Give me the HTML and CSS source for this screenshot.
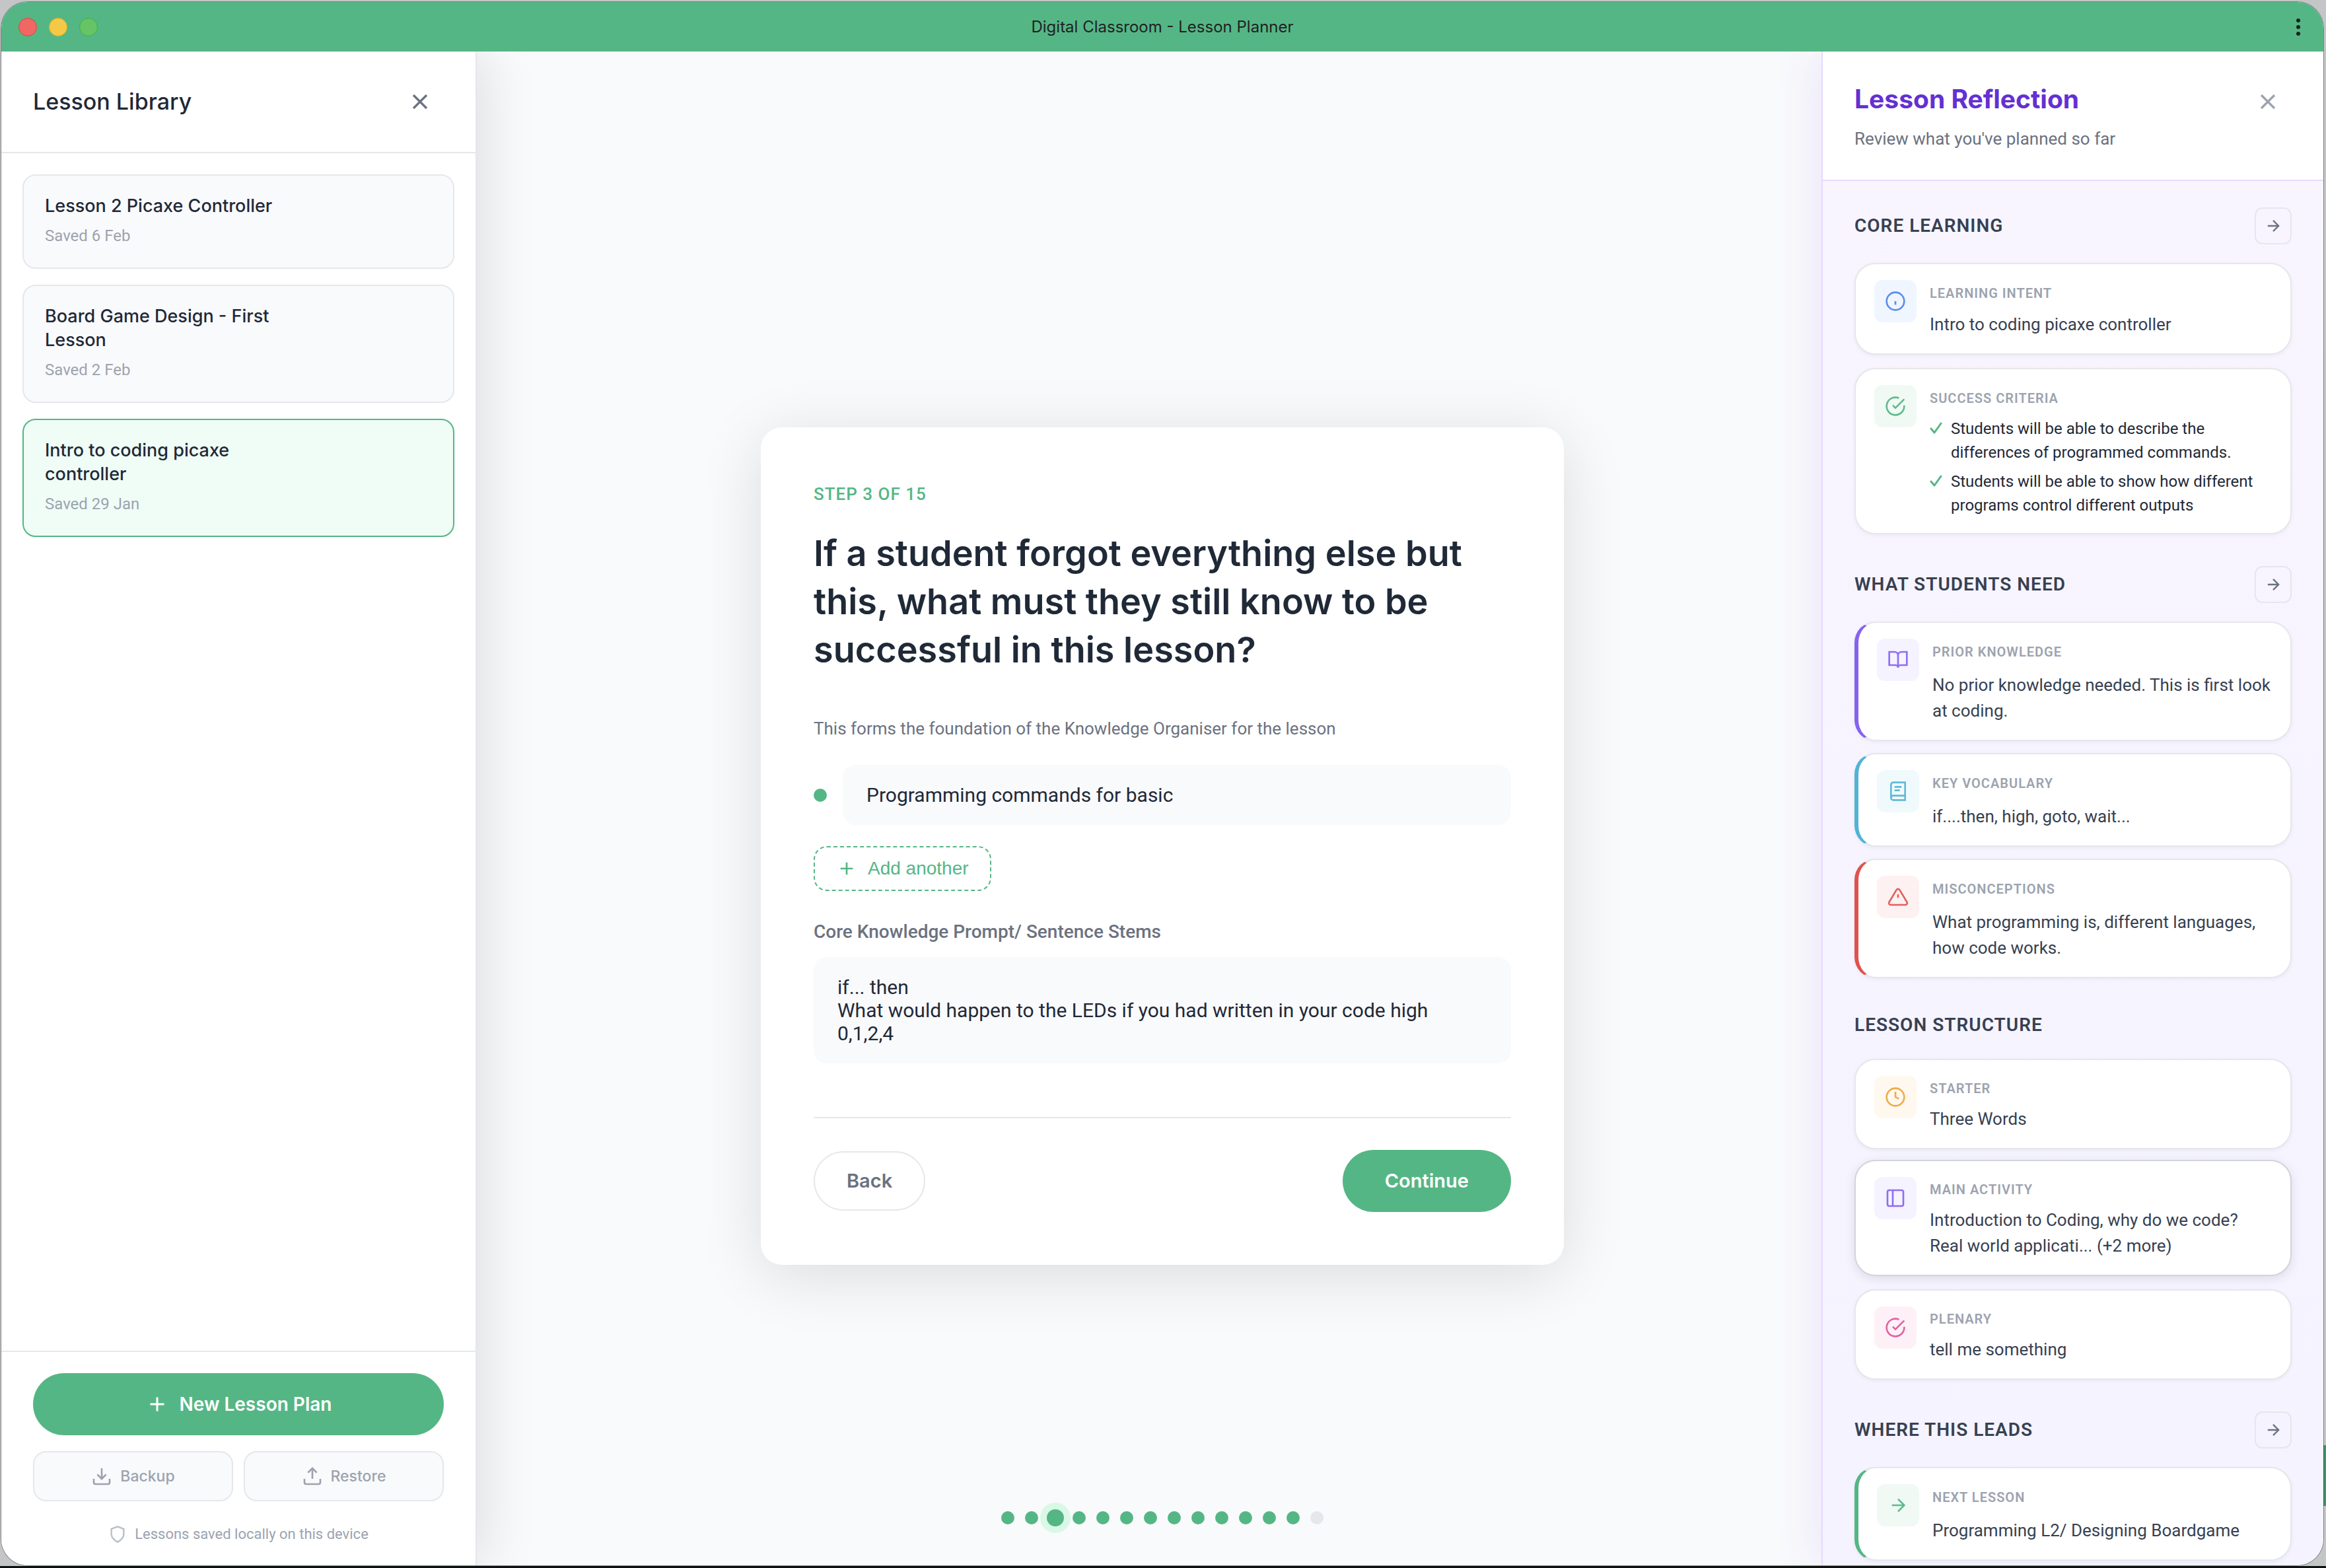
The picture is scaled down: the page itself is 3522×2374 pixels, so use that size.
FILE: index.html
```html
<!DOCTYPE html>
<html lang="en">
<head>
<meta charset="utf-8">
<title>Digital Classroom - Lesson Planner</title>
<link rel="stylesheet" href="styles.css">
</head>
<body>
<div class="window">
  <header class="titlebar">
    <div class="lights"><span class="light red"></span><span class="light amber"></span><span class="light green"></span></div>
    <div class="window-title">Digital Classroom - Lesson Planner</div>
    <button class="menu" aria-label="Menu"><svg width="8" height="28" viewBox="0 0 8 28"><circle cx="4" cy="4" r="3"/><circle cx="4" cy="14" r="3"/><circle cx="4" cy="24" r="3"/></svg></button>
  </header>
  <div class="workspace">
    <aside class="library">
      <div class="library-head">
        <h2>Lesson Library</h2>
        <button class="close" aria-label="Close library"><svg width="40" height="40" viewBox="0 0 24 24"><path d="M18 6 6 18M6 6l12 12"/></svg></button>
      </div>
      <div class="lessons">
        <button class="lesson"><span class="lesson-name">Lesson 2 Picaxe Controller</span><span class="lesson-date">Saved 6 Feb</span></button>
        <button class="lesson"><span class="lesson-name">Board Game Design - First Lesson</span><span class="lesson-date">Saved 2 Feb</span></button>
        <button class="lesson selected"><span class="lesson-name">Intro to coding picaxe controller</span><span class="lesson-date">Saved 29 Jan</span></button>
      </div>
      <div class="library-foot">
        <button class="primary new-plan"><svg width="36" height="36" viewBox="0 0 24 24"><path d="M12 5v14M5 12h14"/></svg>New Lesson Plan</button>
        <div class="file-actions">
          <button class="file-button"><svg width="32" height="32" viewBox="0 0 24 24"><path d="M21 15v4a2 2 0 0 1-2 2H5a2 2 0 0 1-2-2v-4M7 10l5 5 5-5M12 15V3"/></svg>Backup</button>
          <button class="file-button"><svg width="32" height="32" viewBox="0 0 24 24"><path d="M21 15v4a2 2 0 0 1-2 2H5a2 2 0 0 1-2-2v-4M17 8l-5-5-5 5M12 3v12"/></svg>Restore</button>
        </div>
        <p class="local-note"><svg width="28" height="28" viewBox="0 0 24 24"><path d="M12 22s8-4 8-10V5l-8-3-8 3v7c0 6 8 10 8 10z"/></svg>Lessons saved locally on this device</p>
      </div>
    </aside>

    <main class="planner">
      <form class="step-card">
        <p class="step-count">STEP 3 OF 15</p>
        <h1>If a student forgot everything else but this, what must they still know to be successful in this lesson?</h1>
        <label class="hint" for="knowledge">This forms the foundation of the Knowledge Organiser for the lesson</label>
        <div class="entry"><span class="bullet"></span><input class="field" id="knowledge" type="text" value="Programming commands for basic"></div>
        <button type="button" class="add"><svg width="32" height="32" viewBox="0 0 24 24"><path d="M12 5v14M5 12h14"/></svg>Add another</button>
        <label class="stem-label" for="stems">Core Knowledge Prompt/ Sentence Stems</label>
        <textarea class="field stems" id="stems" rows="3">if... then
What would happen to the LEDs if you had written in your code high 0,1,2,4</textarea>
        <div class="step-actions">
          <button type="button" class="back">Back</button>
          <button type="button" class="primary continue">Continue</button>
        </div>
      </form>
      <div class="dots"><i></i><i></i><i class="now"></i><i></i><i></i><i></i><i></i><i></i><i></i><i></i><i></i><i></i><i></i><i class="todo"></i></div>
    </main>

    <aside class="reflection">
      <div class="reflection-head">
        <div><h2>Lesson Reflection</h2><p>Review what you've planned so far</p></div>
        <button class="close pale" aria-label="Close reflection"><svg width="40" height="40" viewBox="0 0 24 24"><path d="M18 6 6 18M6 6l12 12"/></svg></button>
      </div>
      <div class="reflection-body">
        <section>
          <div class="section-head"><h3>CORE LEARNING</h3><button class="go" aria-label="Go to core learning"><svg width="28" height="28" viewBox="0 0 24 24"><path d="M5 12h14M12 5l7 7-7 7"/></svg></button></div>
          <div class="cards roomy">
            <article class="card"><span class="tile blue"><svg viewBox="0 0 24 24"><circle cx="12" cy="12" r="10"/><path d="M12 16v-4"/></svg></span><div class="card-text"><h4>LEARNING INTENT</h4><p>Intro to coding picaxe controller</p></div></article>
            <article class="card"><span class="tile mint"><svg viewBox="0 0 24 24"><path d="M22 11.08V12a10 10 0 1 1-5.93-9.14M22 4 12 14.01l-3-3"/></svg></span><div class="card-text"><h4>SUCCESS CRITERIA</h4>
              <ul>
                <li><svg width="20" height="24" viewBox="2 0 20 24"><path d="M4 13l5 6L19 5"/></svg>Students will be able to describe the differences of programmed commands.</li>
                <li><svg width="20" height="24" viewBox="2 0 20 24"><path d="M4 13l5 6L19 5"/></svg>Students will be able to show how different programs control different outputs</li>
              </ul></div></article>
          </div>
        </section>
        <section>
          <div class="section-head"><h3>WHAT STUDENTS NEED</h3><button class="go" aria-label="Go to what students need"><svg width="28" height="28" viewBox="0 0 24 24"><path d="M5 12h14M12 5l7 7-7 7"/></svg></button></div>
          <div class="cards">
            <article class="card edge edge-violet"><span class="tile violet"><svg viewBox="0 0 24 24"><path d="M2 3h6a4 4 0 0 1 4 4v14a3 3 0 0 0-3-3H2zM22 3h-6a4 4 0 0 0-4 4v14a3 3 0 0 1 3-3h7z"/></svg></span><div class="card-text"><h4>PRIOR KNOWLEDGE</h4><p>No prior knowledge needed. This is first look at coding.</p></div></article>
            <article class="card edge edge-cyan"><span class="tile cyan"><svg viewBox="0 0 24 24"><path d="M4 19.5A2.5 2.5 0 0 1 6.5 17H20M6.500 2H20v20H6.500A2.500 2.500 0 0 1 4 19.500v-15A2.500 2.500 0 0 1 6.500 2zM8 7h8M8 11h6"/></svg></span><div class="card-text"><h4>KEY VOCABULARY</h4><p>if....then, high, goto, wait...</p></div></article>
            <article class="card edge edge-red"><span class="tile red-tile"><svg viewBox="0 0 24 24"><path d="M10.290 3.860 1.820 18a2 2 0 0 0 1.710 3h16.940a2 2 0 0 0 1.710-3L13.710 3.860a2 2 0 0 0-3.420 0zM12 9v4"/></svg></span><div class="card-text"><h4>MISCONCEPTIONS</h4><p>What programming is, different languages, how code works.</p></div></article>
          </div>
        </section>
        <section>
          <div class="section-head"><h3>LESSON STRUCTURE</h3></div>
          <div class="cards">
            <article class="card"><span class="tile amber-tile"><svg viewBox="0 0 24 24"><circle cx="12" cy="12" r="10"/><path d="M12 6v6l4 2"/></svg></span><div class="card-text"><h4>STARTER</h4><p>Three Words</p></div></article>
            <article class="card hovered"><span class="tile violet"><svg viewBox="0 0 24 24"><rect x="3" y="3" width="18" height="18" rx="2"/><path d="M9 3v18"/></svg></span><div class="card-text"><h4>MAIN ACTIVITY</h4><p>Introduction to Coding, why do we code? Real world applicati... (+2 more)</p></div></article>
            <article class="card"><span class="tile pink"><svg viewBox="0 0 24 24"><path d="M22 11.08V12a10 10 0 1 1-5.93-9.14M22 4 12 14.01l-3-3"/></svg></span><div class="card-text"><h4>PLENARY</h4><p>tell me something</p></div></article>
          </div>
        </section>
        <section>
          <div class="section-head"><h3>WHERE THIS LEADS</h3><button class="go" aria-label="Go to where this leads"><svg width="28" height="28" viewBox="0 0 24 24"><path d="M5 12h14M12 5l7 7-7 7"/></svg></button></div>
          <div class="cards">
            <article class="card edge edge-green"><span class="tile mint"><svg viewBox="0 0 24 24"><path d="M5 12h14M12 5l7 7-7 7"/></svg></span><div class="card-text"><h4>NEXT LESSON</h4><p>Programming L2/ Designing Boardgame</p></div></article>
          </div>
        </section>
      </div>
    </aside>
  </div>
</div>
</body>
</html>
```
FILE: styles.css
```css
:root {
  --green: #55b685;
  --ink: #1f2937;
  --slate: #374151;
  --grey: #6b7280;
  --pale: #9ca3af;
  --line: #e5e7eb;
  --wash: #f9fafc;
  --display: Inter, "Liberation Sans", sans-serif;
  --text: Roboto, "Liberation Sans", sans-serif;
}

* { box-sizing: border-box; }

body {
  margin: 0;
  height: 100vh;
  padding: 3px 4px 4px 2px;
  background:
    linear-gradient(to top, #0c1210 3px, transparent 3px),
    linear-gradient(#409468, #409468) right bottom 94px / 4px 92px no-repeat,
    #c4c5c6;
  font-family: var(--text);
  color: var(--ink);
}

h1, h2, h3, h4, p, ul { margin: 0; padding: 0; }
button { font: inherit; color: inherit; cursor: pointer; margin: 0; }
svg { fill: none; stroke: currentColor; stroke-width: 2; flex: none; }

.window {
  height: 100%;
  display: flex;
  flex-direction: column;
  border-radius: 40px;
  overflow: hidden;
  background: var(--wash);
  box-shadow: 0 0 0 1px rgba(0, 0, 0, .35);
}

.titlebar {
  flex: none;
  height: 75px;
  padding: 0 26px;
  display: grid;
  grid-template-columns: 1fr auto 1fr;
  align-items: center;
  background: var(--green);
  position: relative;
  z-index: 2;
}
.lights { display: flex; gap: 18px; }
.light { width: 28px; height: 28px; border-radius: 50%; border: 1px solid; }
.red { background: #f06764; border-color: #d9483f; }
.amber { background: #f4c945; border-color: #dfae22; }
.green { background: #66c466; border-color: #3fae49; }
.window-title { font: 400 24px/32px var(--display); color: #202124; }
.menu { justify-self: end; display: flex; padding: 0 8px; border: 0; background: none; color: #17241e; }
.menu svg { fill: currentColor; stroke: none; }

.workspace {
  flex: 1;
  min-height: 0;
  display: grid;
  grid-template-columns: 720px minmax(0, 1fr) 760px;
}

/* Lesson library */
.library {
  display: flex;
  flex-direction: column;
  background: #fff;
  border-right: 2px solid var(--line);
  box-shadow: 8px 0 80px rgba(0, 0, 0, .12);
  z-index: 1;
}
.library-head {
  display: flex;
  align-items: center;
  justify-content: space-between;
  height: 154px;
  padding: 0 64px 0 48px;
  border-bottom: 2px solid var(--line);
}
.library-head h2 { font: 500 34px/44px var(--display); }
.close { display: flex; padding: 0; border: 0; background: none; color: var(--grey); }
.close.pale { color: var(--pale); }

.lessons {
  flex: 1;
  display: flex;
  flex-direction: column;
  gap: 24px;
  padding: 32px;
}
.lesson {
  display: flex;
  flex-direction: column;
  align-items: flex-start;
  gap: 8px;
  padding: 28px 32px;
  border: 2px solid var(--line);
  border-radius: 20px;
  background: var(--wash);
  text-align: left;
}
.lesson.selected { background: #effdf6; border-color: var(--green); }
.lesson-name { max-width: 360px; font: 500 27px/36px var(--display); }
.lesson-date { font-size: 24px; line-height: 39px; color: var(--pale); }

.library-foot {
  display: flex;
  flex-direction: column;
  gap: 24px;
  padding: 32px 48px 24px;
  border-top: 2px solid var(--line);
}
.primary { border: 0; border-radius: 47px; height: 94px; background: var(--green); color: #fff; }
.new-plan { display: flex; align-items: center; justify-content: center; gap: 16px; font: 600 28px/40px var(--display); }
.file-actions { display: grid; grid-template-columns: 1fr 1fr; gap: 16px; }
.file-button {
  display: flex;
  align-items: center;
  justify-content: center;
  gap: 12px;
  height: 76px;
  border: 2px solid var(--line);
  border-radius: 20px;
  background: var(--wash);
  color: var(--pale);
  font: 500 23px/36px var(--display);
}
.local-note {
  display: flex;
  align-items: center;
  justify-content: center;
  gap: 12px;
  padding: 8px 0 5px;
  font-size: 22px;
  line-height: 36px;
  color: var(--pale);
}
.local-note svg { opacity: .7; }

/* Planner step */
.planner {
  display: flex;
  flex-direction: column;
  align-items: center;
  justify-content: space-between;
  padding: 569px 0 59px 40px;
}
.step-card {
  width: 100%;
  max-width: 1216px;
  padding: 80px;
  display: flex;
  flex-direction: column;
  border-radius: 32px;
  background: #fff;
  box-shadow: 0 16px 96px rgba(0, 0, 0, .12);
}
.step-count { font-size: 26px; line-height: 42px; font-weight: 500; letter-spacing: 1px; color: var(--green); }
h1 { margin-top: 32px; font: 600 54px/73px var(--display); }
.hint { margin-top: 62px; font-size: 26px; line-height: 42px; color: var(--grey); }
.entry { display: flex; align-items: center; gap: 24px; margin-top: 34px; }
.bullet { flex: none; width: 20px; height: 20px; border-radius: 50%; background: var(--green); }
.field {
  display: block;
  width: 100%;
  margin: 0;
  border: 0;
  border-radius: 20px;
  background: var(--wash);
  color: var(--ink);
  font: 400 30px/35px var(--text);
  padding: 28px 36px;
}
.stems { margin-top: 18px; resize: none; overflow: hidden; height: 161px; }
.add {
  align-self: flex-start;
  display: flex;
  align-items: center;
  gap: 16px;
  height: 68px;
  margin-top: 32px;
  padding: 0 32px;
  border: 2px dashed var(--green);
  border-radius: 20px;
  background: none;
  color: var(--green);
  font: 400 28px/36px "Liberation Sans", sans-serif;
}
.stem-label { margin-top: 42px; font-size: 28px; line-height: 40px; font-weight: 500; color: var(--grey); }
.step-actions {
  display: flex;
  align-items: center;
  justify-content: space-between;
  margin-top: 81px;
  padding-top: 48px;
  border-top: 2px solid var(--line);
}
.back {
  height: 90px;
  padding: 0 48px;
  border: 2px solid var(--line);
  border-radius: 45px;
  background: #fff;
  color: var(--grey);
}
.continue { padding: 0 64px; }
.back, .continue { font: 600 29px/40px var(--display); }

.dots { display: flex; align-items: center; gap: 16px; height: 26px; }
.dots i { width: 20px; height: 20px; border-radius: 50%; background: var(--green); }
.dots .now { width: 26px; height: 26px; margin: 0 -3px; box-shadow: 0 0 0 10px #d9f9e6; }
.dots .todo { background: var(--line); }

/* Lesson reflection */
.reflection {
  display: flex;
  flex-direction: column;
  min-height: 0;
  overflow: hidden;
  border-left: 2px solid #e6d9fd;
  background: linear-gradient(#f9f5ff, #f4f3ff);
  box-shadow: -8px 0 64px rgba(109, 60, 220, .1);
}
.reflection-head {
  flex: none;
  display: flex;
  align-items: flex-start;
  justify-content: space-between;
  height: 196px;
  padding: 46px 64px 0 48px;
  border-bottom: 2px solid #e6d9fd;
  background: #fff;
}
.reflection-head h2 { font: 700 39px/52px var(--display); color: #6430d2; }
.reflection-head p { margin-top: 14px; font-size: 26px; line-height: 40px; color: var(--grey); }
.reflection-head .close { margin-top: 10px; }
.reflection-body {
  display: flex;
  flex-direction: column;
  gap: 48px;
  padding: 40px 48px;
}
.section-head { display: flex; align-items: center; justify-content: space-between; margin-bottom: 28px; }
h3 { font-size: 28px; line-height: 46px; font-weight: 600; letter-spacing: 1px; color: var(--slate); }
.go {
  display: flex;
  align-items: center;
  justify-content: center;
  width: 56px;
  height: 56px;
  padding: 0;
  border: 2px solid var(--line);
  border-radius: 12px;
  background: none;
  color: var(--grey);
}
.cards { display: flex; flex-direction: column; gap: 18px; }
.card {
  display: flex;
  gap: 20px;
  align-items: flex-start;
  padding: 24px 28px;
  border: 2px solid var(--line);
  border-radius: 32px;
  background: #fff;
  box-shadow: 0 2px 6px rgba(0, 0, 0, .05);
}
.card.hovered { border-color: #d1d5db; box-shadow: 0 4px 16px rgba(0, 0, 0, .1); transform: translateY(-2px); }
.edge { border-left-width: 6px; }
.edge-violet { border-left-color: #8562ee; }
.edge-cyan { border-left-color: #52b4d2; }
.edge-red { border-left-color: #df524d; }
.edge-green { border-left-color: var(--green); }
.tile {
  flex: none;
  display: flex;
  align-items: center;
  justify-content: center;
  width: 64px;
  height: 64px;
  border-radius: 12px;
}
.tile svg { width: 32px; height: 32px; }
.blue { background: #f0f6ff; color: #5b8def; }
.mint { background: #f1f9f5; color: #5fbb8c; }
.violet { background: #f5f3ff; color: #8f6ef2; }
.cyan { background: #f0fafc; color: #5fbbd8; }
.red-tile { background: #fdf1f1; color: #e2625e; }
.amber-tile { background: #fef8ef; color: #efac4b; }
.pink { background: #fdf1f7; color: #e263a5; }
.card-text { flex: 1; min-width: 0; padding-top: 4px; }
h4 { margin-bottom: 12px; font-size: 20px; line-height: 30px; font-weight: 600; letter-spacing: 1px; color: var(--pale); }
.edge .card-text { padding-top: 5px; }
.edge h4 { margin-bottom: 16px; }
.roomy { gap: 20px; }
.roomy .card-text { padding-top: 5px; }
.roomy h4 { margin-bottom: 13px; }
.card-text p { font-size: 26px; line-height: 39px; color: var(--slate); }
.card-text ul { list-style: none; display: flex; flex-direction: column; gap: 8px; }
.card-text li { display: flex; gap: 12px; font-size: 24px; line-height: 36px; }
.card-text li svg { margin-top: 5px; color: var(--green); stroke-width: 3; stroke-linecap: round; stroke-linejoin: round; }
```
